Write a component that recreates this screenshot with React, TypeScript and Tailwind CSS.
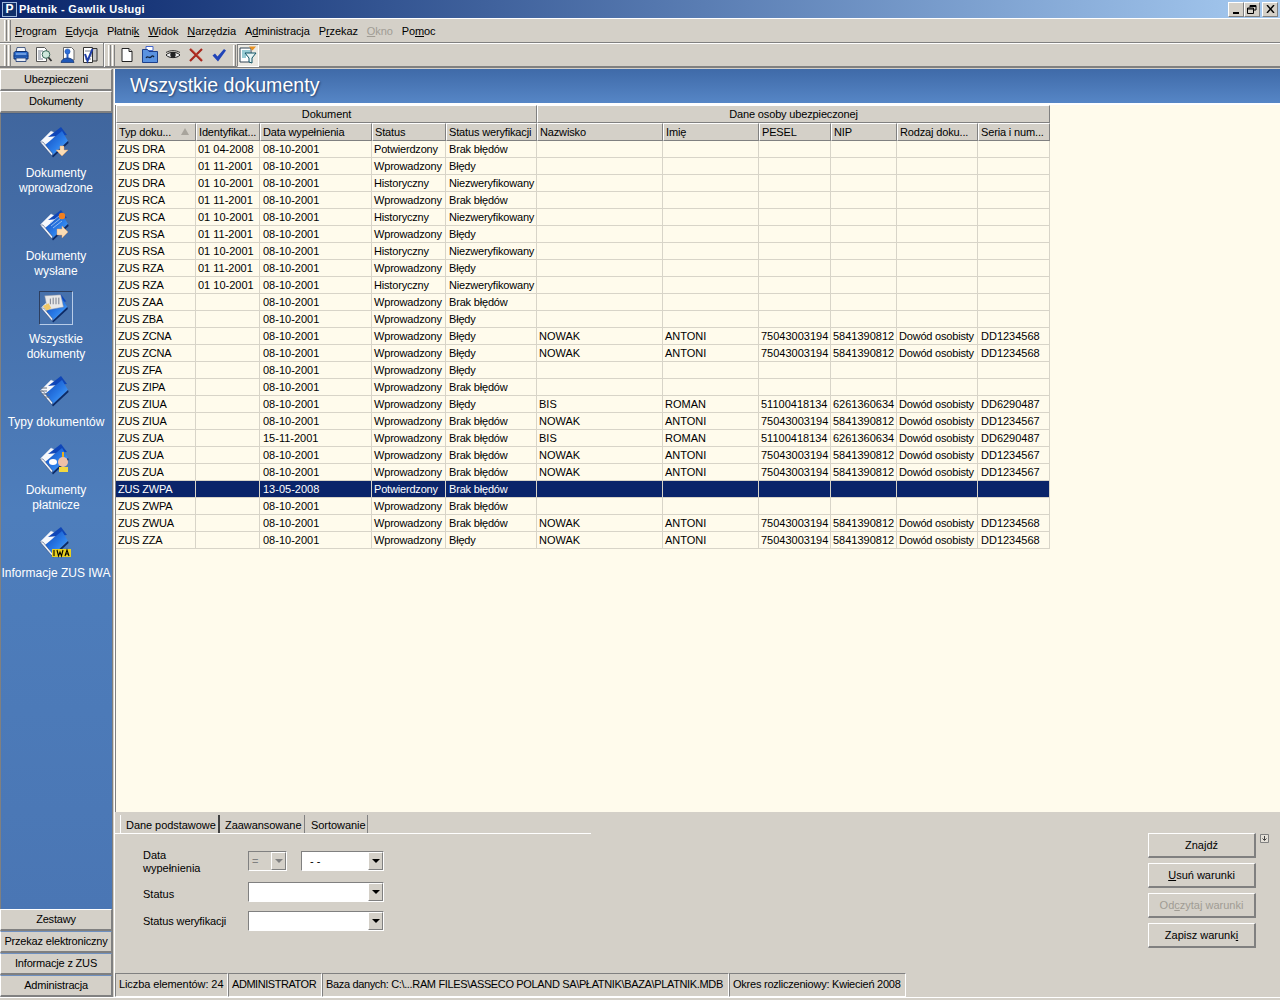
import { ReactNode } from "react";

const FONT = "[font-family:'Liberation_Sans',Arial,sans-serif]";

const columns = [
  "Typ doku...",
  "Identyfikat...",
  "Data wypełnienia",
  "Status",
  "Status weryfikacji",
  "Nazwisko",
  "Imię",
  "PESEL",
  "NIP",
  "Rodzaj doku...",
  "Seria i num...",
];

// per column tweaks, the caps and wide letters run a bit wider than in the original font
const cellClass = [
  "pl-[2px] tracking-[-0.2px]",
  "pl-[2px]",
  "pl-[3px]",
  "pl-[2px] tracking-[-0.18px]",
  "pl-[3px] tracking-[-0.18px]",
  "pl-[2px]",
  "pl-[2px]",
  "pl-[2px]",
  "pl-[2px]",
  "pl-[2px] tracking-[-0.2px]",
  "pl-[3px]",
];

const nowak = (s: string) => ["NOWAK", "ANTONI", "75043003194", "5841390812", "Dowód osobisty", s];
const bis = ["BIS", "ROMAN", "51100418134", "6261360634", "Dowód osobisty", "DD6290487"];
const blank = ["", "", "", "", "", ""];

const rows: string[][] = [
  ["ZUS DRA", "01 04-2008", "08-10-2001", "Potwierdzony", "Brak błędów", ...blank],
  ["ZUS DRA", "01 11-2001", "08-10-2001", "Wprowadzony", "Błędy", ...blank],
  ["ZUS DRA", "01 10-2001", "08-10-2001", "Historyczny", "Niezweryfikowany", ...blank],
  ["ZUS RCA", "01 11-2001", "08-10-2001", "Wprowadzony", "Brak błędów", ...blank],
  ["ZUS RCA", "01 10-2001", "08-10-2001", "Historyczny", "Niezweryfikowany", ...blank],
  ["ZUS RSA", "01 11-2001", "08-10-2001", "Wprowadzony", "Błędy", ...blank],
  ["ZUS RSA", "01 10-2001", "08-10-2001", "Historyczny", "Niezweryfikowany", ...blank],
  ["ZUS RZA", "01 11-2001", "08-10-2001", "Wprowadzony", "Błędy", ...blank],
  ["ZUS RZA", "01 10-2001", "08-10-2001", "Historyczny", "Niezweryfikowany", ...blank],
  ["ZUS ZAA", "", "08-10-2001", "Wprowadzony", "Brak błędów", ...blank],
  ["ZUS ZBA", "", "08-10-2001", "Wprowadzony", "Błędy", ...blank],
  ["ZUS ZCNA", "", "08-10-2001", "Wprowadzony", "Błędy", ...nowak("DD1234568")],
  ["ZUS ZCNA", "", "08-10-2001", "Wprowadzony", "Błędy", ...nowak("DD1234568")],
  ["ZUS ZFA", "", "08-10-2001", "Wprowadzony", "Błędy", ...blank],
  ["ZUS ZIPA", "", "08-10-2001", "Wprowadzony", "Brak błędów", ...blank],
  ["ZUS ZIUA", "", "08-10-2001", "Wprowadzony", "Błędy", ...bis],
  ["ZUS ZIUA", "", "08-10-2001", "Wprowadzony", "Brak błędów", ...nowak("DD1234567")],
  ["ZUS ZUA", "", "15-11-2001", "Wprowadzony", "Brak błędów", ...bis],
  ["ZUS ZUA", "", "08-10-2001", "Wprowadzony", "Brak błędów", ...nowak("DD1234567")],
  ["ZUS ZUA", "", "08-10-2001", "Wprowadzony", "Brak błędów", ...nowak("DD1234567")],
  ["ZUS ZWPA", "", "13-05-2008", "Potwierdzony", "Brak błędów", ...blank],
  ["ZUS ZWPA", "", "08-10-2001", "Wprowadzony", "Brak błędów", ...blank],
  ["ZUS ZWUA", "", "08-10-2001", "Wprowadzony", "Brak błędów", ...nowak("DD1234568")],
  ["ZUS ZZA", "", "08-10-2001", "Wprowadzony", "Błędy", ...nowak("DD1234568")],
];

const raised = "border border-t-white border-l-white border-r-[#808080] border-b-[#808080]";
const sunken = "border border-t-[#808080] border-l-[#808080] border-r-white border-b-white";

const Grip = () => (
  <div className="flex gap-[1px] shrink-0">
    <div className="w-[3px] h-[21px] border-l border-l-white border-r border-r-[#808080] bg-[#d4d0c8]" />
    <div className="w-[3px] h-[21px] border-l border-l-white border-r border-r-[#808080] bg-[#d4d0c8]" />
  </div>
);

const Menu = ({ pre, u, post, off }: { pre: string; u: string; post: string; off?: boolean }) => (
  <span className={off ? "text-[#a09c94]" : "text-black"}>
    {pre}
    <span className="underline">{u}</span>
    {post}
  </span>
);

const Slot = ({ children }: { children: ReactNode }) => (
  <div className="w-[23px] flex items-center justify-center shrink-0">{children}</div>
);

const PrintIcon = () => (
  <svg width="18" height="18" viewBox="0 0 18 18">
    <path d="M5 1.500h8l1 5H4z" fill="#f4f6fa" stroke="#27406e" strokeWidth=".8" />
    <path d="M2 7c0-1 1-1.500 2-1.500h10c1 0 2 .5 2 1.500v6H2z" fill="#2f6fd0" stroke="#10306e" />
    <path d="M4 8h10" stroke="#a8c8f0" />
    <path d="M4 12h10v3.500H4z" fill="#e8ecf4" stroke="#10306e" strokeWidth=".8" />
    <path d="M1.500 10h15" stroke="#15408a" />
  </svg>
);
const PreviewIcon = () => (
  <svg width="18" height="18" viewBox="0 0 18 18">
    <path d="M1.500 1.500h8l2 2v12h-10z" fill="#fff" stroke="#555" />
    <path d="M3 5h5M3 7h3M3 9h3M3 11h3M3 13h5" stroke="#7a8290" />
    <circle cx="11" cy="8.500" r="3.800" fill="#cfe8dc" stroke="#3a6a5a" />
    <path d="M13.500 11.500l3 3.500" stroke="#333" strokeWidth="1.800" />
  </svg>
);
const PersonIcon = () => (
  <svg width="18" height="18" viewBox="0 0 18 18">
    <path d="M5.500 1.500h8l2.500 2.500v10h-10.500z" fill="#fff" stroke="#666" />
    <circle cx="9.500" cy="5.500" r="2.600" fill="#2f6fd8" stroke="#1d4a9a" strokeWidth=".5" />
    <path d="M8.500 8h2v5h-2z" fill="#2a5fc0" />
    <path d="M3 16.500c.5-3 3-4.500 6.500-4.500s6 1.500 6.500 4.500z" fill="#2058b8" stroke="#10306e" strokeWidth=".7" />
  </svg>
);
const DocsCheckIcon = () => (
  <svg width="18" height="18" viewBox="0 0 18 18">
    <path d="M8 2.500h8v12.500H8z" fill="#c8c8c8" stroke="#333" />
    <path d="M2.500 1.500h9v15h-9z" fill="#fff" stroke="#333" />
    <path d="M4 5h6M9 8h2M9 10h2M4 13h6" stroke="#7a8290" />
    <path d="M4 8l2.500 7 5-12" fill="none" stroke="#1f3fa8" strokeWidth="2" />
  </svg>
);
const NewIcon = () => (
  <svg width="16" height="16" viewBox="0 0 16 16">
    <path d="M3 1.500h7l3 3v10H3z" fill="#fff" stroke="#222" />
    <path d="M10 1.500v3h3" fill="#ddd" stroke="#222" />
  </svg>
);
const OpenIcon = () => (
  <svg width="18" height="18" viewBox="0 0 18 18">
    <path d="M5 .5h7v4H5z" fill="#fff" stroke="#4466cc" />
    <path d="M1.500 3.500h5l1.500 2h8.500v11h-15z" fill="#5a92e0" stroke="#1d3f8a" />
    <path d="M5 12c2-3 3 1 5-1s2-1 3 0" fill="none" stroke="#10203a" strokeWidth="1.300" />
  </svg>
);
const EyeIcon = () => (
  <svg width="16" height="16" viewBox="0 0 16 16">
    <path d="M1 8c3-3.500 11-3.500 14 0-3 3.500-11 3.500-14 0z" fill="#eee" stroke="#222" />
    <circle cx="8" cy="7.800" r="2.700" fill="#222" />
    <path d="M1 5.500c4-2.500 10-2.500 14 0" fill="none" stroke="#333" />
  </svg>
);
const CrossIcon = () => (
  <svg width="16" height="16" viewBox="0 0 16 16">
    <path d="M2 2l12 12M14 2L2 14" stroke="#a8281e" strokeWidth="2.200" />
    <path d="M3 1.500l11 11" stroke="#d85a40" strokeWidth=".6" />
  </svg>
);
const CheckIcon = () => (
  <svg width="16" height="16" viewBox="0 0 16 16">
    <path d="M1.500 8.500l2.500-2 2.500 3L13 2l2 1.500L7 14.500z" fill="#2044b8" />
  </svg>
);
const FilterIcon = () => (
  <svg width="20" height="20" viewBox="0 0 20 20">
    <path d="M2 3h11v14H2z" fill="#fff" stroke="#345" />
    <path d="M4 6h8M4 8h8M4 10h5M4 12h4" stroke="#3399aa" />
    <path d="M7 8h11l-4 5v5l-3-1v-4z" fill="#e8f4f4" stroke="#156" />
    <path d="M11 1.500h7l-3.500 4z" fill="#e89020" />
  </svg>
);

// folder icon shared by the sidebar items, the corner badge differs
const Folder = ({ children }: { children?: ReactNode }) => (
  <svg width="34" height="34" viewBox="0 0 34 34">
    <defs>
      <linearGradient id="fold" x1="0" y1="0" x2="1" y2="1">
        <stop offset="0" stopColor="#0f46b8" />
        <stop offset=".55" stopColor="#2a7ce8" />
        <stop offset="1" stopColor="#5ab0fa" />
      </linearGradient>
    </defs>
    <path d="M1 17L12 6l6 3L7 21z" fill="#f6f8fc" stroke="#c4d0e4" strokeWidth=".5" />
    <path d="M9 12L22 2l6 8z" fill="#0f46b8" />
    <path d="M6 20L23 6l6 10-16 15z" fill="url(#fold)" />
    <path d="M1 17l12 14 .6-2.500L4 17z" fill="#eef1f7" stroke="#1c3464" strokeWidth=".5" />
    <path d="M13 31l16-15 .6 2L14 32.500z" fill="#0c2a66" />
    {children}
  </svg>
);

const sideItems: { lines: string[]; badge: ReactNode; active?: boolean }[] = [
  {
    lines: ["Dokumenty", "wprowadzone"],
    badge: <path d="M21 21h4v4h4l-6 6-6-6h4z" fill="#fbdcb4" stroke="#e8a060" strokeWidth=".4" />,
  },
  {
    lines: ["Dokumenty", "wysłane"],
    badge: (
      <>
        <path d="M11 15l9-7M12 18l10-8M14 20l9-7" stroke="#a8ccf4" strokeWidth=".8" />
        <circle cx="23" cy="8" r="3.200" fill="#f08020" />
        <path d="M18 21h5v-3l6 6-6 6v-3h-5z" fill="#fbdcb4" stroke="#e8a060" strokeWidth=".4" />
      </>
    ),
  },
  {
    lines: ["Wszystkie", "dokumenty"],
    active: true,
    badge: (
      <>
        <path d="M5 4l17-1 3 13-17 3z" fill="#e8e8e8" stroke="#8a90a0" strokeWidth=".5" />
        <path d="M11 7v6M14 6v7M17 6v7M20 6v7" stroke="#707888" />
        <path d="M3 15l6-3 3 5-5 3z" fill="#f0c868" />
      </>
    ),
  },
  {
    lines: ["Typy dokumentów"],
    badge: <path d="M2 14h6M2 17h6M3 20h7M5 23h6" stroke="#667080" />,
  },
  {
    lines: ["Dokumenty", "płatnicze"],
    badge: (
      <>
        <ellipse cx="14" cy="20" rx="4" ry="3" fill="#fff" />
        <circle cx="24" cy="20" r="5" fill="#f0c0a8" />
        <path d="M23 10h2v5h-2z" fill="#e8b020" />
        <path d="M20 25h9v5h-9z" fill="#f4d840" />
      </>
    ),
  },
  {
    lines: ["Informacje ZUS IWA"],
    badge: (
      <>
        <path d="M13 24h19v8H13z" fill="#e8d020" />
        <path d="M15 25v6M18 25l1.500 6 1.500-4 1.500 4 1.500-6M26 31l2-6 2 6M27 29h2" fill="none" stroke="#000" strokeWidth="1.100" />
      </>
    ),
  },
];

const SideButton = ({ label, accent }: { label: string; accent?: boolean }) => (
  <div
    className={`h-[22px] flex items-center justify-center text-black bg-[#d4d0c8] tracking-[-0.18px] border border-b-2 border-b-[#808080] border-r-[#808080] border-l-white ${
      accent ? "border-t-[#6f90c0]" : "border-t-white"
    }`}
  >
    {label}
  </div>
);

const Combo = ({ w, disabled, text }: { w: string; disabled?: boolean; text?: string }) => (
  <div className={`${w} h-[20px] flex ${sunken} ${disabled ? "bg-[#d4d0c8]" : "bg-white"}`}>
    <div className={`flex-1 leading-[18px] ${disabled ? "text-[#808080] pl-[3px]" : "text-black pl-[8px]"}`}>{text}</div>
    <div className={`w-[15px] bg-[#d4d0c8] flex items-center justify-center ${raised}`}>
      <div
        className={`w-0 h-0 border-x-[4px] border-t-[4px] border-x-transparent ${
          disabled ? "border-t-[#808080]" : "border-t-black"
        }`}
      />
    </div>
  </div>
);

const FormButton = ({ children, disabled }: { children: ReactNode; disabled?: boolean }) => (
  <div
    className={`w-[108px] h-[25px] flex items-center justify-center bg-[#d4d0c8] pt-[1px] ${raised} border-b-2 border-r-2 ${
      disabled ? "text-[#a09c94]" : "text-black"
    }`}
  >
    {children}
  </div>
);

const StatusCell = ({ w, children, track }: { w: string; children: string; track: string }) => (
  <div className={`${w} ${track} h-[24px] px-[3px] pb-[2px] flex items-center whitespace-nowrap overflow-hidden ${sunken}`}>{children}</div>
);

export default function App() {
  return (
    <div className={`${FONT} w-[1280px] h-[1000px] bg-[#d4d0c8] flex flex-col overflow-hidden text-[11px] text-black`}>
      {/* title bar */}
      <div className="h-[18px] flex items-center bg-gradient-to-r from-[#0a246a] to-[#a6caf0] shrink-0 pl-[2px] pr-[2px]">
        <div className="w-[15px] h-[15px] bg-[#10306a] border border-[#9fb8dc] flex items-center justify-center text-white font-bold text-[12px] leading-none">
          P
        </div>
        <span className="ml-[2px] text-white font-bold text-[11px] tracking-[0.35px]">Płatnik - Gawlik Usługi</span>
        <div className="ml-auto flex">
          <div className={`w-[16px] h-[15px] bg-[#d4d0c8] ${raised} flex items-end justify-center pb-[2px]`}>
            <div className="w-[6px] h-[2px] bg-black" />
          </div>
          <div className={`w-[16px] h-[15px] bg-[#d4d0c8] ${raised} flex items-center justify-center`}>
            <svg width="10" height="9" viewBox="0 0 10 9">
              <path d="M3 .5h6v4.500H7M3 .5v2M3 1.500h6" fill="none" stroke="#000" />
              <path d="M.5 3h6v5.500h-6zM.5 4h6" fill="none" stroke="#000" />
            </svg>
          </div>
          <div className={`ml-[2px] w-[16px] h-[15px] bg-[#d4d0c8] ${raised} flex items-center justify-center`}>
            <svg width="9" height="8" viewBox="0 0 9 8">
              <path d="M1 0l7 8M8 0L1 8" stroke="#000" strokeWidth="1.400" />
            </svg>
          </div>
        </div>
      </div>

      {/* menu bar */}
      <div className="h-[25px] flex items-center shrink-0 border-t border-t-white border-b border-b-[#808080] pl-[4px]">
        <Grip />
        <div className="flex gap-[9px] ml-[4px] pt-[1px] tracking-[-0.1px]">
          <Menu pre="" u="P" post="rogram" />
          <Menu pre="" u="E" post="dycja" />
          <Menu pre="Płatni" u="k" post="" />
          <Menu pre="" u="W" post="idok" />
          <Menu pre="" u="N" post="arzędzia" />
          <Menu pre="A" u="d" post="ministracja" />
          <Menu pre="P" u="r" post="zekaz" />
          <Menu pre="" u="O" post="kno" off />
          <Menu pre="Po" u="m" post="oc" />
        </div>
      </div>

      {/* toolbar */}
      <div className="h-[25px] flex items-center shrink-0 border-t border-t-white border-b-2 border-b-[#808080] pl-[4px]">
        <Grip />
        <div className="flex items-center -ml-[2px]">
          <Slot><PrintIcon /></Slot>
          <Slot><PreviewIcon /></Slot>
          <Slot><PersonIcon /></Slot>
          <Slot><DocsCheckIcon /></Slot>
        </div>
        <div className="ml-[2px] mr-[3px] w-[2px] h-[24px] bg-[#808080] border-r border-r-white shrink-0" />
        <Grip />
        <Slot><NewIcon /></Slot>
        <Slot><OpenIcon /></Slot>
        <Slot><EyeIcon /></Slot>
        <Slot><CrossIcon /></Slot>
        <Slot><CheckIcon /></Slot>
        <div className="ml-[3px] mr-[1px] w-[3px] h-[21px] border-l border-l-white border-r border-r-[#808080] shrink-0" />
        <div className="w-[22px] h-[23px] bg-[#ece9e2] flex items-center justify-center border border-t-[#808080] border-l-[#808080] border-r-white border-b-white">
          <FilterIcon />
        </div>
      </div>

      <div className="flex flex-1 min-h-0 pt-[1px]">
        {/* sidebar */}
        <div className="w-[112px] shrink-0 flex flex-col">
          <SideButton label="Ubezpieczeni" />
          <SideButton label="Dokumenty" />
          <div className="flex-1 border-t border-t-[#3d5e90] border-l border-l-[#808080] pr-[1px] bg-gradient-to-b from-[#40669e] via-[#4e7ebc] to-[#4a76b4] flex flex-col items-center pt-[11px] text-white text-[12px] leading-[15px] text-center">
            {sideItems.map((it) => (
              <div key={it.lines.join(" ")} className="flex flex-col items-center w-full mb-[12px]">
                <div
                  className={`w-[34px] h-[34px] flex items-center justify-center ${
                    it.active ? "border border-t-[#2c3e60] border-l-[#2c3e60] border-r-[#b8cce8] border-b-[#b8cce8]" : ""
                  }`}
                >
                  <Folder>{it.badge}</Folder>
                </div>
                <div className="mt-[7px] whitespace-nowrap">
                  {it.lines.map((l) => (
                    <div key={l}>{l}</div>
                  ))}
                </div>
              </div>
            ))}
          </div>
          <SideButton label="Zestawy" />
          <SideButton label="Przekaz elektroniczny" accent />
          <SideButton label="Informacje z ZUS" accent />
          <SideButton label="Administracja" accent />
        </div>
        <div className="w-[3px] shrink-0 border-l border-l-[#808080] border-r border-r-white" />

        {/* main */}
        <div className="flex-1 min-w-0 flex flex-col">
          <div className="h-[34px] shrink-0 bg-gradient-to-b from-[#3f6aa8] to-[#5686c6] flex items-center pl-[15px] pb-[1px] text-white text-[19.6px] [text-shadow:1px_1px_2px_#24406e]">
            Wszystkie dokumenty
          </div>
          <div className="h-[2px] shrink-0 bg-white" />

          {/* grid */}
          <div className="h-[707px] shrink-0 bg-[#fffbec] border-l border-l-[#808080] overflow-hidden">
            <div className="w-[934px]">
              <div className="flex h-[18px] text-center">
                <div className={`w-[421px] bg-[#d4d0c8] ${raised} leading-[16px] tracking-[-0.1px]`}>Dokument</div>
                <div className={`w-[513px] bg-[#d4d0c8] ${raised} leading-[16px] tracking-[-0.15px]`}>Dane osoby ubezpieczonej</div>
              </div>
              <div className="grid grid-cols-[80px_64px_112px_74px_91px_126px_96px_72px_66px_81px_72px] h-[18px]">
                {columns.map((c, i) => (
                  <div key={c} className={`relative bg-[#d4d0c8] ${raised} pl-[2px] leading-[17px] tracking-[-0.15px] whitespace-nowrap overflow-hidden`}>
                    {c}
                    {i === 0 && (
                      <div className="absolute right-[6px] top-[4px] w-0 h-0 border-x-[4px] border-b-[7px] border-x-transparent border-b-[#a8a49c]" />
                    )}
                  </div>
                ))}
              </div>
              {rows.map((r, ri) => {
                const sel = ri === 20;
                return (
                  <div
                    key={ri}
                    className={`grid grid-cols-[80px_64px_112px_74px_91px_126px_96px_72px_66px_81px_72px] h-[17px] ${
                      sel ? "bg-[#0a246a] text-white" : "text-black"
                    }`}
                  >
                    {r.map((c, ci) => (
                      <div
                        key={ci}
                        className={`${cellClass[ci]} leading-[16px] whitespace-nowrap overflow-hidden border-b border-r border-[#d8d4c8]`}
                      >
                        {c}
                      </div>
                    ))}
                  </div>
                );
              })}
            </div>
          </div>

          {/* search panel */}
          <div className="flex-1 min-h-0 flex flex-col relative">
            <div className="flex items-end h-[22px] pl-[5px] border-b border-b-white w-[476px] tracking-[-0.05px]">
              <div className="w-[100px] h-[18px] pl-[5px] pt-[2px] flex items-center bg-[#d4d0c8] border-l border-l-white border-r-2 border-r-[#404040] whitespace-nowrap">
                Dane podstawowe
              </div>
              <div className="w-[85px] h-[18px] pl-[5px] pt-[2px] flex items-center border-r border-r-[#808080] whitespace-nowrap">Zaawansowane</div>
              <div className="w-[63px] h-[18px] pl-[6px] pt-[2px] flex items-center border-r border-r-[#808080] whitespace-nowrap">Sortowanie</div>
            </div>
            <div className="flex flex-1 min-h-0">
              <div className="pl-[28px] pt-[14px] flex flex-col">
                <div className="flex items-center h-[26px] mb-[8px]">
                  <div className="w-[105px] leading-[13px] pt-[1px]">
                    Data
                    <br />
                    wypełnienia
                  </div>
                  <Combo w="w-[39px]" disabled text="=" />
                  <div className="w-[14px]" />
                  <Combo w="w-[83px]" text="- -" />
                </div>
                <div className="flex items-center h-[20px] mb-[9px]">
                  <div className="w-[105px] pt-[4px]">Status</div>
                  <Combo w="w-[136px]" />
                </div>
                <div className="flex items-center h-[20px]">
                  <div className="w-[105px] whitespace-nowrap tracking-[-0.1px]">Status weryfikacji</div>
                  <Combo w="w-[136px]" />
                </div>
              </div>
              <div className="ml-auto mr-[24px] flex flex-col gap-[5px] -mt-[1px]">
                <FormButton>Znajdź</FormButton>
                <FormButton>
                  <span>
                    <span className="underline">U</span>suń warunki
                  </span>
                </FormButton>
                <FormButton disabled>
                  <span>
                    Od<span className="underline">c</span>zytaj warunki
                  </span>
                </FormButton>
                <FormButton>
                  <span>
                    Zapisz warunk<span className="underline">i</span>
                  </span>
                </FormButton>
              </div>
            </div>
            <div className="absolute right-[11px] top-[22px] w-[9px] h-[9px]">
              <svg width="9" height="9" viewBox="0 0 9 9" className="block">
                <path d="M.5.5h8v8h-8z" fill="#e4e0d8" stroke="#808080" />
                <path d="M4.500 2v4M2.500 4.500l2 2 2-2" fill="none" stroke="#404040" />
              </svg>
            </div>
            {/* status bar */}
            <div className="h-[24px] shrink-0 flex">
              <StatusCell w="w-[113px]" track="tracking-[-0.1px]">Liczba elementów: 24</StatusCell>
              <StatusCell w="w-[94px]" track="tracking-[-0.45px]">ADMINISTRATOR</StatusCell>
              <StatusCell w="w-[407px]" track="tracking-[-0.35px]">Baza danych: C:\...RAM FILES\ASSECO POLAND SA\PŁATNIK\BAZA\PLATNIK.MDB</StatusCell>
              <StatusCell w="w-[177px]" track="tracking-[-0.23px]">Okres rozliczeniowy: Kwiecień 2008</StatusCell>
            </div>
          </div>
        </div>
      </div>
      <div className="h-[3px] shrink-0 border-t border-t-white" />
    </div>
  );
}
